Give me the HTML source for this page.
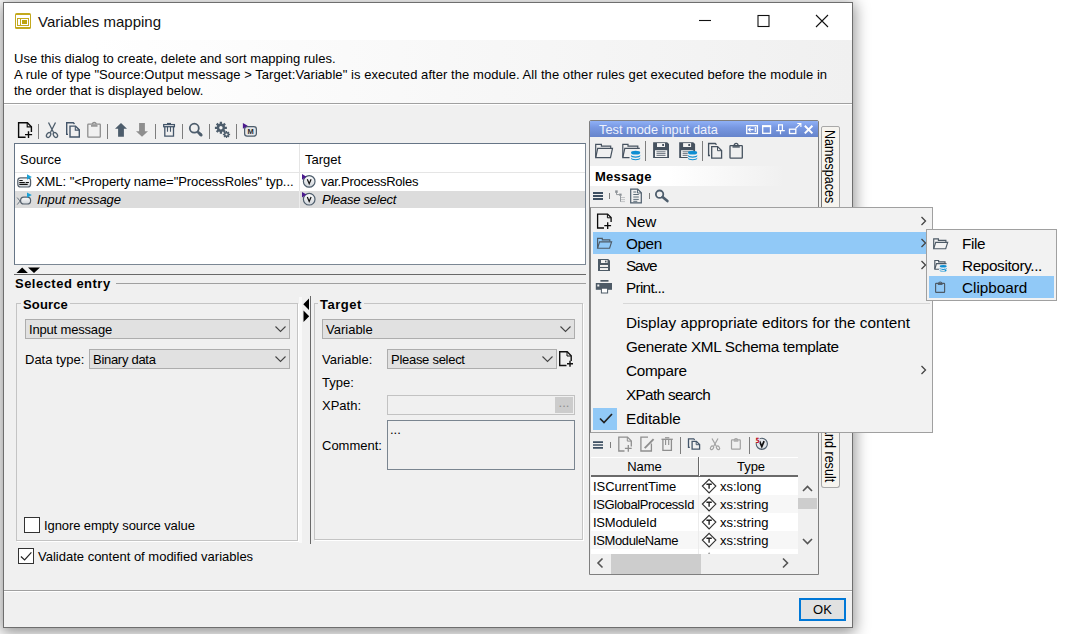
<!DOCTYPE html>
<html><head><meta charset="utf-8"><title>Variables mapping</title>
<style>
*{box-sizing:border-box;margin:0;padding:0}
html,body{width:1073px;height:634px;overflow:hidden;background:#fff}
body{position:relative;font-family:"Liberation Sans",sans-serif;font-size:13px;color:#000;line-height:16px}
.a{position:absolute}
.t{position:absolute;white-space:nowrap;line-height:16px;margin-top:1px}
#win{position:absolute;left:3px;top:2px;width:850px;height:626px;background:#f0f0f0;border:1px solid #6e6e6e;box-shadow:0 3px 14px 2px rgba(0,0,0,.42)}
.b{font-weight:bold}
.i{font-style:italic}
.combo{position:absolute;background:#e1e1e1;border:1px solid #adadad;height:20px}
.combo span{position:absolute;left:3px;top:2px;white-space:nowrap}
.sep{position:absolute;width:1px;background:#8a8a8a}
.menu{position:absolute;background:#f2f2f2;border:1px solid #a0a0a0}
.mi{position:absolute;white-space:nowrap;font-size:15.3px;line-height:22px;margin-top:1px}
svg{position:absolute;overflow:visible}
</style></head>
<body>
<div id="win"></div>
<!-- title bar -->
<div class="a" style="left:4px;top:3px;width:848px;height:37px;background:#fff"></div>
<div class="t" style="left:38px;top:11px;font-size:15px;line-height:20px;color:#111;letter-spacing:-0.008px">Variables mapping</div>
<!-- header info -->
<div class="a" style="left:4px;top:40px;width:848px;height:63px;background:linear-gradient(to right,#fff 0,#fff 90px,#f0f0f0 100%)"></div>
<div class="a" style="left:4px;top:103px;width:848px;height:1px;background:#a0a0a0"></div><div class="a" style="left:4px;top:104px;width:848px;height:1px;background:#fff"></div>
<div class="t" style="left:14px;top:50px">Use this dialog to create, delete and sort mapping rules.</div>
<div class="t" style="left:14px;top:66px;letter-spacing:0.06px">A rule of type "Source:Output message &gt; Target:Variable" is executed after the module. All the other rules get executed before the module in</div>
<div class="t" style="left:14px;top:82px">the order that is displayed below.</div>
<!-- title icon + window controls -->
<svg style="left:15px;top:13px" width="16" height="16" viewBox="0 0 16 16"><rect x="0" y="0" width="16" height="16" rx="1.600" fill="#c3a91e"/><rect x="1" y="2" width="14" height="12" fill="#fff"/><rect x="2.500" y="5.500" width="11" height="7" fill="none" stroke="#c3a91e" stroke-width="1"/><path d="M5.500 5.500v7" stroke="#c3a91e" stroke-width="1"/><rect x="7" y="7" width="5" height="4" fill="#bda30f"/></svg>
<svg style="left:698px;top:12px" width="140" height="18" viewBox="0 0 140 18"><g fill="none" stroke="#111" stroke-width="1.1"><path d="M1 8.5h12"/><rect x="60" y="3.5" width="11" height="11"/><path d="M118 3l12 12M130 3l-12 12"/></g></svg>

<!-- left toolbar -->
<svg style="left:0;top:0" width="300" height="160" viewBox="0 0 300 160">
 <g stroke="#7d7d7d" stroke-width="1"><path d="M38.500 124v15M107.500 124v15M155.500 124v15M182.500 124v15M209.500 124v15M236.500 124v15"/></g>
 <!-- new doc -->
 <g fill="none" stroke="#0a0a0a" stroke-width="1.400"><path d="M25.600 137.200H18.600V122.700h8.800l4 4v5.300"/><path d="M27.200 123v3.900h3.900" stroke-width="1.100"/><path d="M28.500 131.200v6.800M25 134.600h7.100"/></g>
 <!-- scissors -->
 <g fill="none" stroke="#4d5d6c" stroke-width="1.300"><path d="M48.500 122.500l5.200 10.300M55.500 122.500l-5.200 10.300"/><ellipse cx="48.600" cy="135" rx="1.800" ry="2.700" transform="rotate(35 48.600 135)"/><ellipse cx="55.400" cy="135" rx="1.800" ry="2.700" transform="rotate(-35 55.400 135)"/></g>
 <!-- copy -->
 <g fill="none" stroke="#44566a" stroke-width="1.400"><path d="M68 134.400h-1.300V122.800h6.600l1.200 1.200"/><path d="M70 126.100h5.500l3.800 3.800v7.100H70z"/><path d="M75.300 126.300v3.800h3.800" stroke-width="1.100"/></g>
 <!-- paste disabled -->
 <g fill="none" stroke="#8e8e8e" stroke-width="1.300"><rect x="87.800" y="124.100" width="12.500" height="13" rx="0.600"/><path d="M91 125.900h6.500" stroke-width="1.600"/><path d="M92.300 124.300a1.900 1.900 0 0 1 3.800 0"/></g>
 <!-- up / down -->
 <path d="M121 123l6 5.800h-3.100v8h-5.800v-8H115z" fill="#4d5d6c"/>
 <path d="M142 136.800l-6-5.600h3.100v-8.100h5.800v8.100h3.100z" fill="#8e8e8e"/>
 <!-- trash -->
 <g fill="none" stroke="#44566a" stroke-width="1.300"><rect x="163.700" y="124.600" width="10.700" height="2.100" fill="#fff"/><path d="M167 123.600h4" stroke-width="1.400"/><path d="M164.800 127v9.100h8.700V127"/><path d="M167.500 127v4.700M170.500 127v4.700" stroke-width="1.100"/></g>
 <!-- magnifier -->
 <g fill="none" stroke="#4d5d6c"><circle cx="194.300" cy="128.200" r="4.500" stroke-width="1.800"/><path d="M197.700 131.700l3.400 3.200" stroke-width="2.800" stroke-linecap="butt"/><path d="M200 134l1.200 1.100" stroke-width="2.800" stroke-linecap="round"/></g>
 <!-- gears -->
 <g fill="#4d5d6c"><circle cx="220.900" cy="127.800" r="4.200"/><g stroke="#4d5d6c" stroke-width="2.300"><path d="M220.900 121.800v12M214.900 127.800h12M216.700 123.600l8.400 8.400M225.100 123.600l-8.400 8.400"/></g><circle cx="220.900" cy="127.800" r="1.700" fill="#f4f4f4"/>
 <circle cx="226.500" cy="134.500" r="2.500"/><g stroke="#4d5d6c" stroke-width="1.300"><path d="M226.500 130.900v7.200M222.900 134.500h7.200M224 132l5 5M229 132l-5 5"/></g><circle cx="226.500" cy="134.500" r="1.100" fill="#f4f4f4"/></g>
 <!-- M icon -->
 <g><rect x="244.600" y="126.600" width="11.800" height="9.600" rx="2.600" fill="#e4e6e9" stroke="#4d5d6c" stroke-width="1.200"/><path d="M242.900 123v5.800l4.800-3z" fill="#4b1a8e"/><text x="250.500" y="134.200" font-size="7.500" font-weight="bold" text-anchor="middle" fill="#2a2a2a" font-family="Liberation Sans, sans-serif">M</text></g>
</svg>

<!-- rule table -->
<div class="a" style="left:14px;top:143px;width:572px;height:122px;background:#fff;border:1px solid #7b8794;border-top-color:#667586;border-left-color:#667586"></div>
<div class="a" style="left:15px;top:172px;width:570px;height:1px;background:#e5e5e5"></div>
<div class="a" style="left:299px;top:144px;width:1px;height:64px;background:#e5e5e5"></div>
<div class="a" style="left:15px;top:191px;width:570px;height:17px;background:#dcdcdc"></div>
<div class="a" style="left:299px;top:191px;width:1px;height:17px;background:#ececec"></div>
<div class="t" style="left:20px;top:151px">Source</div>
<div class="t" style="left:305px;top:151px">Target</div>
<div class="t" style="left:36px;top:173px;letter-spacing:-0.065px">XML: "&lt;Property name="ProcessRoles" typ...</div>
<div class="t i" style="left:37px;top:191px;letter-spacing:-0.115px">Input message</div>
<div class="t" style="left:321px;top:173px;letter-spacing:-0.247px">var.ProcessRoles</div>
<div class="t i" style="left:322px;top:191px;letter-spacing:-0.254px">Please select</div>
<!-- row icons -->
<svg style="left:0;top:0" width="330" height="215" viewBox="0 0 330 215">
 <defs><linearGradient id="gg" x1="0" y1="0" x2="0" y2="1"><stop offset="0" stop-color="#fdfdfd"/><stop offset="1" stop-color="#cfd4d9"/></linearGradient></defs>
 <rect x="17.800" y="177.800" width="12.800" height="9.200" rx="2.800" fill="url(#gg)" stroke="#55606c" stroke-width="1.200"/>
 <path d="M19.300 180.500h3.400M19.300 182.500h5.500M25.700 182.500h3.200M19.300 184.400h8.400" stroke="#111" stroke-width="1.200"/>
 <path d="M27 174.200v5.500l4.800-2.800z" fill="#1ba1d6"/>
 <path d="M17.200 197.600l4.600 5.600M17.200 204.600l4.600-5.600" stroke="#6a7580" stroke-width="1" fill="none"/>
 <rect x="20.600" y="197.100" width="10" height="6.900" rx="3.300" fill="url(#gg)" stroke="#55606c" stroke-width="1.200"/>
 <path d="M27 192.400v5.400l4.800-2.700z" fill="#1ba1d6"/>
 <g id="vic"><circle cx="309.200" cy="181.400" r="5.800" fill="url(#gg)" stroke="#4d5d6c" stroke-width="1.200"/><path d="M307.300 179.300l1.900 4.400 1.900-4.400" fill="none" stroke="#111" stroke-width="1.200"/><path d="M302 174.100v5.600l4.500-3z" fill="#4b1a8e"/></g>
 <use href="#vic" y="17.800"/>
</svg>

<!-- splitter -->
<svg style="left:16px;top:267px" width="26" height="7" viewBox="0 0 26 7"><path d="M0.500 6l5.700-5.600 5.700 5.600zM12 0.500h12l-6 5.600z" fill="#000"/></svg>
<div class="a" style="left:14px;top:274px;width:572px;height:1px;background:#696969"></div>
<div class="t b" style="left:15px;top:275px;letter-spacing:.48px">Selected entry</div>
<div class="a" style="left:116px;top:283px;width:470px;height:1px;background:#a0a0a0"></div>

<!-- Source group -->
<div class="a" style="left:16px;top:303px;width:282px;height:238px;border:1px solid #c4c4c4;box-shadow:1px 1px 0 #fff"></div>
<div class="t b" style="left:21px;top:296px;background:#f0f0f0;padding:0 2px;letter-spacing:.15px">Source</div>
<div class="combo" style="left:25px;top:319px;width:265px"><span style="letter-spacing:-0.175px">Input message</span></div>
<div class="t" style="left:25px;top:351px">Data type:</div>
<div class="combo" style="left:89px;top:349px;width:201px"><span style=";letter-spacing:-0.288px">Binary data</span></div>
<div class="a" style="left:24px;top:517px;width:16px;height:16px;border:1px solid #333;background:#fff"></div>
<div class="t" style="left:44px;top:517px;letter-spacing:-0.096px">Ignore empty source value</div>
<div class="a" style="left:18px;top:548px;width:16px;height:16px;border:1px solid #333;background:#fff"></div>
<svg style="left:18px;top:548px" width="16" height="16" viewBox="0 0 16 16"><path d="M2.900 8.500l3.700 3.500 6.800-7.600" fill="none" stroke="#222" stroke-width="1.200"/></svg>
<div class="t" style="left:38px;top:548px">Validate content of modified variables</div>

<!-- vertical splitter -->
<div class="a" style="left:299px;top:297px;width:3px;height:246px;background:#f9f9f9"></div>
<div class="a" style="left:310px;top:296px;width:1px;height:248px;background:#696969"></div>
<svg style="left:303px;top:298px" width="7" height="25" viewBox="0 0 7 25"><path d="M6 0.500v11.500l-5.700-5.700zM0.500 12.500v11.500l5.700-5.700z" fill="#000"/></svg>

<!-- Target group -->
<div class="a" style="left:314px;top:303px;width:269px;height:237px;border:1px solid #c4c4c4;box-shadow:1px 1px 0 #fff"></div>
<div class="t b" style="left:318px;top:296px;background:#f0f0f0;padding:0 2px;letter-spacing:.5px">Target</div>
<div class="combo" style="left:322px;top:319px;width:253px"><span>Variable</span></div>
<div class="t" style="left:322px;top:351px">Variable:</div>
<div class="combo" style="left:387px;top:349px;width:170px"><span style="letter-spacing:-0.279px">Please select</span></div>
<svg style="left:558px;top:349px" width="18" height="20" viewBox="0 0 18 20"><g fill="none" stroke="#111" stroke-width="1.400"><path d="M8.500 16.500H1.700V2.700h7.500l4 4v5.300"/><path d="M9 3v4h4" stroke-width="1"/><path d="M12 11.700v6M9 14.700h6"/></g></svg>
<div class="t" style="left:322px;top:374px">Type:</div>
<div class="t" style="left:322px;top:397px">XPath:</div>
<div class="a" style="left:387px;top:395px;width:188px;height:20px;border:1px solid #c2c2c2;background:#f0f0f0"></div>
<div class="a" style="left:555px;top:397px;width:18px;height:16px;background:#cccccc;color:#8e8e8e;text-align:center;line-height:12px;font-size:13px">...</div>
<div class="t" style="left:322px;top:437px">Comment:</div>
<div class="a" style="left:387px;top:420px;width:188px;height:50px;border:1px solid #7a8590;background:#f0f0f0"></div>
<div class="t" style="left:390px;top:421px">...</div>

<!-- combo arrows -->
<svg style="left:0;top:0" width="600" height="400" viewBox="0 0 600 400"><g fill="none" stroke="#444" stroke-width="1.100"><path d="M275.500 326.500l5 5 5-5"/><path d="M275.500 356.500l5 5 5-5"/><path d="M560.500 326.500l5 5 5-5"/><path d="M542.500 356.500l5 5 5-5"/></g></svg>

<!-- bottom line + OK -->
<div class="a" style="left:4px;top:590px;width:848px;height:1px;background:#a0a0a0"></div><div class="a" style="left:4px;top:591px;width:848px;height:1px;background:#fff"></div>
<div class="a" style="left:799px;top:598px;width:47px;height:23px;border:2px solid #0078d7;background:#e1e1e1;text-align:center;line-height:19px">OK</div>

<!-- side tabs -->
<div class="a" style="left:821px;top:126px;width:19px;height:361px;background:#f0f0f0"></div>
<div class="a" style="left:821px;top:126px;width:19px;height:82px;background:#f6f4ef;border:1px solid #a8a8a8;border-radius:2px 2px 0 0"></div>
<div class="a" style="left:821px;top:172px;width:1px;height:312px;background:#777"></div>
<div class="a" style="left:837.300px;top:130.300px;width:0;height:0"><div style="position:absolute;left:0;top:0;transform-origin:0 0;transform:rotate(90deg) scaleX(0.91);white-space:nowrap;font-size:13.800px;line-height:16px">Namespaces</div></div>
<div class="a" style="left:821px;top:380px;width:19px;height:108px;background:#f6f4ef;border:1px solid #a8a8a8;border-top:none;border-radius:0 0 3px 3px"></div>
<div class="a" style="left:837.300px;top:367px;width:0;height:0"><div style="position:absolute;left:0;top:0;transform-origin:0 0;transform:rotate(90deg) scaleX(0.91);white-space:nowrap;font-size:13.800px;line-height:16px">Response and result</div></div>
<!-- test mode panel -->
<div class="a" style="left:589px;top:120px;width:230px;height:455px;border:1px solid #7f7f7f;border-radius:2px 2px 0 0;background:#f0f0f0"></div>
<div class="a" style="left:590px;top:121px;width:228px;height:16px;border-radius:1px 1px 0 0;background:linear-gradient(to bottom,#8fb0f6 0,#7898e2 40%,#6684cb 100%)"></div>
<div class="t" style="left:599px;top:121px;color:#eef2fd;font-size:12.800px">Test mode input data</div>
<svg style="left:0;top:0" width="830" height="170" viewBox="0 0 830 170"><g fill="none" stroke="#fff" stroke-width="1.300">
 <rect x="746.700" y="125.700" width="10.700" height="7.800"/><path d="M755.300 127v5M753.500 129.600h-5M750.500 127.600l-2 2 2 2" stroke-width="1.100"/>
 <rect x="762.700" y="126" width="7.800" height="7.300"/><path d="M762 126.200h9.100" stroke-width="1.900"/>
 <path d="M778.600 125v5.300M782.400 125v5.300M778 124.900h5M776.200 130.600h8.600M780.500 131v3.200" stroke-width="1.200"/>
 <rect x="789.500" y="129.200" width="6.300" height="4.300"/><path d="M795.500 128.500l5.200-4.800M797.300 123.500h3.600v3.600" stroke-width="1.100"/>
 <path d="M804.800 125.800l7.600 7.600M812.400 125.800l-7.600 7.600" stroke-width="2"/></g>
 <!-- toolbar icons -->
 <path d="M645.500 141v20M702.500 141v20" stroke="#7d7d7d"/>
 <g fill="none" stroke="#46525f" stroke-width="1.200">
 <path d="M595.700 157.300V144.400h5.700v1.700h9.300v2"/><path d="M595.700 157.600l2-9.300h14.800l-2 9.300z"/>
 <path d="M629.500 157.600h-6.700V144.400h5.200v1.700h9.800v2"/><path d="M622.800 157.300l2-9h15"/>
 </g>
 <g fill="#0e8ed2"><ellipse cx="635.600" cy="152.700" rx="4.600" ry="1.900"/><path d="M631 154.700c0 2.300 9.200 2.300 9.200 0v1.300c0 2.300-9.200 2.300-9.200 0zM631 157.500c0 2.300 9.200 2.300 9.200 0v1c0 2.300-9.200 2.300-9.200 0z"/></g>
 <g id="sv"><path d="M653.100 142.200h14l1.900 1.900v13.900h-15.900z" fill="#46525f"/><rect x="657" y="143.100" width="8" height="3.900" fill="#f4f4f4"/><rect x="662.200" y="144" width="1.800" height="2" fill="#46525f"/><rect x="655" y="150.200" width="12.200" height="6.800" fill="#f4f4f4"/><path d="M656.500 151.800h9M656.500 153.600h9M656.500 155.400h9" stroke="#5c6773" stroke-width="0.900"/></g>
 <use href="#sv" x="26.100"/>
 <g fill="#0e8ed2" stroke="#f0f0f0" stroke-width="0.600"><path d="M687.700 152.500h10v7h-10z" stroke="none" fill="#f0f0f0"/><ellipse cx="692.600" cy="152.700" rx="4.600" ry="1.900" stroke="none"/><path d="M688 154.700c0 2.300 9.200 2.300 9.200 0v1.300c0 2.300-9.200 2.300-9.200 0zM688 157.500c0 2.300 9.200 2.300 9.200 0v1c0 2.300-9.200 2.300-9.200 0z" stroke="none"/></g>
 <g fill="none" stroke="#46525f" stroke-width="1.300"><path d="M710 155.500h-1.400V143.500h6.700l1.200 1.200"/><path d="M711.700 146.600h5.900l4 4v7.600h-9.900z"/><path d="M717.500 146.800v3.900h4" stroke-width="1"/>
 <rect x="730" y="145.700" width="12.300" height="12.500" rx="0.600"/><path d="M732.500 146.900h7.300" stroke-width="1.500"/><path d="M734.200 145.300a1.900 1.900 0 0 1 3.800 0"/></g>
</svg>
<!-- Message header -->
<div class="a" style="left:590px;top:166px;width:228px;height:20px;background:linear-gradient(to right,#fff 0,#fff 35%,#f0f0f0 85%)"></div>
<div class="t b" style="left:595px;top:168px;letter-spacing:.27px">Message</div>
<svg style="left:0;top:0" width="700" height="210" viewBox="0 0 700 210">
 <path d="M593 193h10M593 196h10M593 199h10" stroke="#3d4f62" stroke-width="1.800"/>
 <path d="M609.500 193v6M649.500 193v6" stroke="#7d7d7d"/>
 <g fill="#8a8f94"><rect x="615.200" y="190.400" width="2.500" height="2.500"/><rect x="619.200" y="193.600" width="2.400" height="2.200"/></g><path d="M616.500 192.900v1.700h2.700M620.500 195.800v6" stroke="#8a8f94" stroke-width="0.900" fill="none"/><path d="M621.500 197.500h4M621.500 199.600h4M621.500 201.600h4" stroke="#8a8f94" stroke-width="0.900" fill="none" stroke-dasharray="1 1"/>
 <g fill="none" stroke="#4d5d6c" stroke-width="1.200"><path d="M630.700 189.200h7l3.600 3.600v10.100H630.700z"/><path d="M637.500 189.400v3.600h3.600" stroke-width="0.900"/><path d="M633.300 192h3M633.300 194.500h5.500M633.300 197h5.500M633.300 199.400h5.500M633.300 201.300h4" stroke-width="0.900"/></g>
 <g fill="none" stroke="#4d5d6c"><circle cx="659.600" cy="194.200" r="3.700" stroke-width="1.800"/><path d="M662.600 197.100l4.800 4" stroke-width="2.600" stroke-linecap="round"/></g>
</svg>

<!-- variables toolbar -->
<svg style="left:0;top:0" width="800" height="460" viewBox="0 0 800 460">
 <path d="M593 442.200h10M593 445h10M593 447.800h10" stroke="#3d4f62" stroke-width="1.700"/>
 <path d="M610.500 442v6" stroke="#7d7d7d"/><path d="M680.500 437v17M749.500 437v17" stroke="#7d7d7d"/>
 <g fill="none" stroke="#8e8e8e" stroke-width="1.300"><path d="M624.500 451H618.800V437.100h8.700l3.800 3.800v5.600"/><path d="M627.300 437.300v3.800h3.800" stroke-width="1"/><path d="M628.300 445v6.800M624.900 448.400h6.800"/>
 <path d="M648 437.100H640.900v13.900h10.500v-7.500"/><path d="M653.600 439.200l-8.900 9" stroke-width="1.900"/>
 <path d="M661.500 439.300h11.300"/><path d="M665 437.800h4.300" stroke-width="1.200"/><path d="M662.900 439.600v10.700h8.500v-10.700"/><path d="M665.600 440v5M668.700 440v5" stroke-width="1.100"/></g>
 <g fill="none" stroke="#44566a" stroke-width="1.300"><path d="M689.800 447.400h-1.300V438.900h5.200l1 1"/><path d="M692.100 441.300h4.300l3.200 3.200v4.700h-7.500z"/><path d="M696.200 441.500v3.200h3.200" stroke-width="1"/></g>
 <g fill="none" stroke="#a2a2a2" stroke-width="1.200"><path d="M712 438.500l4.300 7.700M718 438.500l-4.300 7.700"/><ellipse cx="712" cy="447.800" rx="1.400" ry="2" transform="rotate(35 712 447.800)"/><ellipse cx="718" cy="447.800" rx="1.400" ry="2" transform="rotate(-35 718 447.800)"/>
 <rect x="731.500" y="439.900" width="8.800" height="9.300" rx="0.600"/><path d="M733.700 441h4.600" stroke-width="1.300"/><path d="M734.500 440a1.500 1.500 0 0 1 3 0"/></g>
 <g><circle cx="761.800" cy="443.800" r="5.600" fill="#e3e6ea" stroke="#4d5d6c" stroke-width="1.100"/><path d="M759.500 441.200l2.300 5.400 2.300-5.400" fill="none" stroke="#111" stroke-width="1.700"/><rect x="755.300" y="437.300" width="4.300" height="5.800" fill="#f0f0f0"/><text x="755.600" y="443.100" font-size="7.200" fill="#b80014" font-family="DejaVu Sans, sans-serif" font-weight="bold" textLength="4" lengthAdjust="spacingAndGlyphs">5</text></g>
</svg>
<!-- variables table -->
<div class="a" style="left:591px;top:477px;width:207px;height:77px;background:#fff"></div>
<div class="a" style="left:591px;top:495px;width:207px;height:18px;background:#f7f7f7"></div>
<div class="a" style="left:591px;top:531px;width:207px;height:18px;background:#f7f7f7"></div>
<div class="a" style="left:591px;top:457px;width:207px;height:19px;background:#f0f0f0;border-top:1px solid #fff"></div>
<div class="a" style="left:591px;top:475px;width:207px;height:2px;background:#6a6a6a"></div>
<div class="a" style="left:698px;top:457px;width:1px;height:19px;background:#6a6a6a"></div>
<div class="a" style="left:699px;top:457px;width:1px;height:19px;background:#fff"></div>
<div class="a" style="left:698px;top:477px;width:1px;height:77px;background:#ececec"></div>
<div class="t" style="left:591px;top:458px;width:107px;text-align:center">Name</div>
<div class="t" style="left:702px;top:458px;width:98px;text-align:center">Type</div>
<div class="t" style="left:593px;top:478px;letter-spacing:-0.057px">ISCurrentTime</div>
<div class="t" style="left:593px;top:496px;letter-spacing:-0.392px">ISGlobalProcessId</div>
<div class="t" style="left:593px;top:514px;letter-spacing:-0.238px">ISModuleId</div>
<div class="t" style="left:593px;top:532px;letter-spacing:-0.384px">ISModuleName</div>
<div class="t" style="left:720px;top:478px">xs:long</div>
<div class="t" style="left:720px;top:496px">xs:string</div>
<div class="t" style="left:720px;top:514px">xs:string</div>
<div class="t" style="left:720px;top:532px">xs:string</div>
<svg style="left:0;top:0" width="800" height="560" viewBox="0 0 800 560"><g id="tic"><path d="M709.100 479.400l6.700 6.700-6.700 6.700-6.700-6.700z" fill="#fff" stroke="#333" stroke-width="1.200"/><path d="M706.400 484.300h5.400M709.100 484.300v4.500" stroke="#222" stroke-width="1.400" fill="none"/></g><use href="#tic" y="18"/><use href="#tic" y="36"/><use href="#tic" y="54"/><path d="M708 553.500l1.100-1.100 1.100 1.100z" fill="#333"/></svg>
<!-- scrollbars -->
<svg style="left:798px;top:477px" width="20" height="97" viewBox="0 0 20 97"><rect x="0" y="21" width="19" height="11" fill="#cdcdcd"/><path d="M5 14l4.500-4.500 4.500 4.500M5 62l4.500 4.500 4.500-4.500" fill="none" stroke="#555" stroke-width="1.600"/></svg>
<svg style="left:591px;top:553px" width="207" height="21" viewBox="0 0 207 21"><rect x="20" y="1" width="90" height="20" fill="#cdcdcd"/><path d="M11.500 5.500l-4.500 4.500 4.500 4.500M192 5.500l4.500 4.500-4.500 4.500" fill="none" stroke="#555" stroke-width="1.600"/></svg>
<!-- context menu -->
<div class="menu" style="left:590px;top:207px;width:343px;height:226px;border-left-color:#858585"></div>
<div class="a" style="left:593px;top:232px;width:337px;height:22px;background:#91c9f7"></div>
<div class="a" style="left:593px;top:408px;width:24px;height:22px;background:#91c9f7"></div>
<div class="a" style="left:623px;top:303px;width:307px;height:1px;background:#d7d7d7"></div>
<div class="mi" style="left:626px;top:210px;letter-spacing:-0.101px">New</div>
<div class="mi" style="left:626px;top:232px;letter-spacing:-0.407px">Open</div>
<div class="mi" style="left:626px;top:254px;letter-spacing:-1.142px">Save</div>
<div class="mi" style="left:626px;top:276px;letter-spacing:-0.702px">Print...</div>
<div class="mi" style="left:626px;top:311px;letter-spacing:-0.000px">Display appropriate editors for the content</div>
<div class="mi" style="left:626px;top:335px;letter-spacing:-0.336px">Generate XML Schema template</div>
<div class="mi" style="left:626px;top:359px;letter-spacing:-0.317px">Compare</div>
<div class="mi" style="left:626px;top:383px;letter-spacing:-0.645px">XPath search</div>
<div class="mi" style="left:626px;top:407px;letter-spacing:-0.073px">Editable</div>
<svg style="left:0;top:0" width="940" height="440" viewBox="0 0 940 440">
 <g fill="none" stroke="#0a0a0a" stroke-width="1.300"><path d="M604 228H597.600V214.100h10l3.500 3.500v4.300"/><path d="M607.400 214.300v3.500h3.500" stroke-width="1"/><path d="M607.700 222.300v6.700M604.300 225.700h6.800"/></g>
 <g fill="none" stroke="#4d5a66" stroke-width="1.150"><path d="M597.600 248V238.300h4.700v1.500h7.500v1.800"/><path d="M597.600 248.200l2-6.400h12l-2 6.400z"/></g>
 <g><path d="M598 259h10.200l1.800 1.800V271H598z" fill="#4d5a66"/><rect x="601" y="260" width="6.500" height="3" fill="#f2f2f2"/><rect x="605" y="260.600" width="1.500" height="1.800" fill="#4d5a66"/><rect x="600" y="265" width="8" height="5" fill="#f2f2f2"/><path d="M600 267.500h8" stroke="#4d5a66" stroke-width="1.100"/></g>
 <g fill="#4d5a66"><rect x="600.400" y="280" width="8.100" height="1.700"/><rect x="595.800" y="283" width="16.200" height="6.800"/><rect x="597.300" y="284.500" width="2" height="2" fill="#f2f2f2"/><rect x="601.400" y="288.200" width="6.200" height="4.800" fill="#fff" stroke="#4d5a66" stroke-width="1"/></g>
 <g fill="none" stroke="#444" stroke-width="1.300"><path d="M921.500 217l4 4-4 4M921.500 239l4 4-4 4M921.500 261l4 4-4 4M921.500 366l4 4-4 4"/></g>
 <path d="M600 418.500l4 4 8-8.500" fill="none" stroke="#222" stroke-width="1.700"/>
</svg>
<!-- submenu -->
<div class="menu" style="left:926px;top:229px;width:131px;height:72px"></div>
<div class="a" style="left:929px;top:276px;width:125px;height:22px;background:#91c9f7"></div>
<div class="mi" style="left:962px;top:232px;letter-spacing:-0.414px">File</div>
<div class="mi" style="left:962px;top:254px;letter-spacing:-0.364px">Repository...</div>
<div class="mi" style="left:962px;top:276px;letter-spacing:-0.020px">Clipboard</div>
<svg style="left:0;top:0" width="1060" height="300" viewBox="0 0 1060 300">
 <g fill="none" stroke="#4d5a66" stroke-width="1.150"><path d="M933.700 248.500V238.800h4.700v1.500h7.500v1.800"/><path d="M933.700 248.700l2-6.400h12l-2 6.400z"/>
 <path d="M939 269.200h-4.200V260.500h3.800v1.400h6.400v1.600"/><path d="M934.800 269l1.700-5.400h10"/></g>
 <g fill="#0e8ed2"><ellipse cx="943.200" cy="266.200" rx="3.500" ry="1.300"/><path d="M939.700 267.700c0 1.600 7 1.600 7 0v1c0 1.600-7 1.600-7 0zM939.700 269.700c0 1.600 7 1.600 7 0v0.700c0 1.600-7 1.600-7 0z"/></g>
 <g fill="none" stroke="#4d5a66" stroke-width="1.150"><rect x="935.600" y="283.300" width="9" height="9" rx="0.600"/><path d="M937.800 284.300h4.700" stroke-width="1.300"/><path d="M938.700 283.500a1.500 1.500 0 0 1 3 0"/></g>
</svg>


</body></html>
